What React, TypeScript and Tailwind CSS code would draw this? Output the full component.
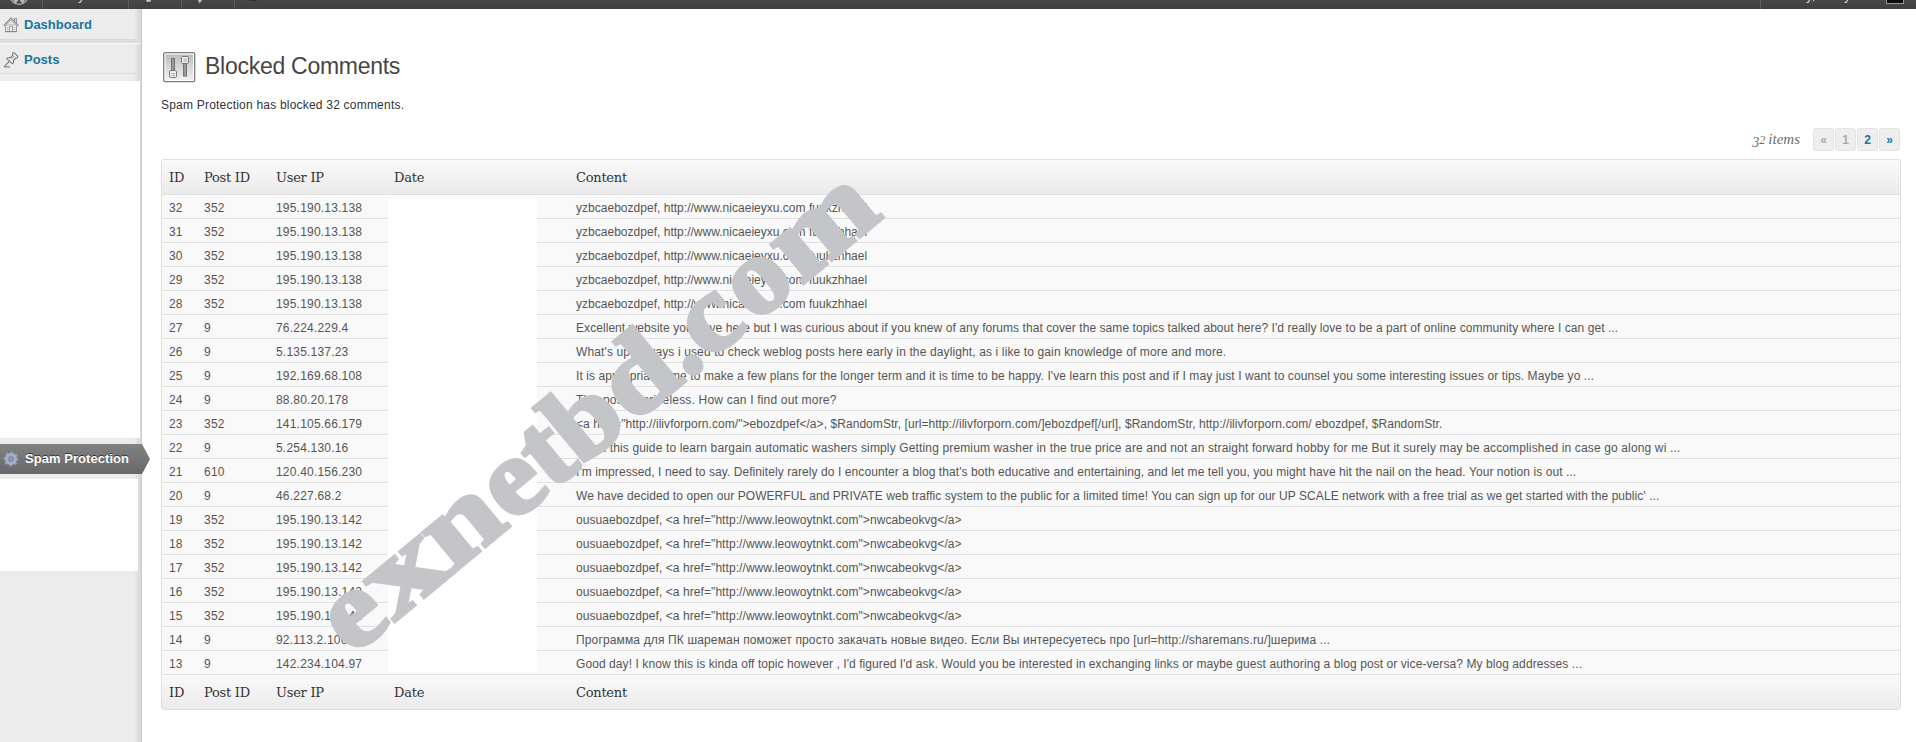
type Comment = { id: number; post: string; ip: string; text: string; track: string };

const nic = "yzbcaebozdpef, http://www.nicaeieyxu.com fuukzhhael";
const leo = 'ousuaebozdpef, <a href="http://www.leowoytnkt.com">nwcabeokvg</a>';

const comments: Comment[] = [
  { id: 32, post: "352", ip: "195.190.13.138", text: nic, track: "tracking-[0.02px]" },
  { id: 31, post: "352", ip: "195.190.13.138", text: nic, track: "tracking-[0.02px]" },
  { id: 30, post: "352", ip: "195.190.13.138", text: nic, track: "tracking-[0.02px]" },
  { id: 29, post: "352", ip: "195.190.13.138", text: nic, track: "tracking-[0.02px]" },
  { id: 28, post: "352", ip: "195.190.13.138", text: nic, track: "tracking-[0.02px]" },
  { id: 27, post: "9", ip: "76.224.229.4", track: "tracking-[0.061px]", text: "Excellent website you have here but I was curious about if you knew of any forums that cover the same topics talked about here? I'd really love to be a part of online community where I can get ..." },
  { id: 26, post: "9", ip: "5.135.137.23", track: "tracking-[0.125px]", text: "What's up, always i used to check weblog posts here early in the daylight, as i like to gain knowledge of more and more." },
  { id: 25, post: "9", ip: "192.169.68.108", track: "tracking-[0.096px]", text: "It is appropriate time to make a few plans for the longer term and it is time to be happy. I've learn this post and if I may just I want to counsel you some interesting issues or tips. Maybe yo ..." },
  { id: 24, post: "9", ip: "88.80.20.178", track: "tracking-[0.19px]", text: "This post is priceless. How can I find out more?" },
  { id: 23, post: "352", ip: "141.105.66.179", track: "tracking-[0.058px]", text: '<a href="http://ilivforporn.com/">ebozdpef</a>, $RandomStr, [url=http://ilivforporn.com/]ebozdpef[/url], $RandomStr, http://ilivforporn.com/ ebozdpef, $RandomStr.' },
  { id: 22, post: "9", ip: "5.254.130.16", track: "tracking-[0.14px]", text: "Track this guide to learn bargain automatic washers simply Getting premium washer in the true price are and not an straight forward hobby for me But it surely may be accomplished in case go along wi ..." },
  { id: 21, post: "610", ip: "120.40.156.230", track: "tracking-[0.075px]", text: "I'm impressed, I need to say. Definitely rarely do I encounter a blog that's both educative and entertaining, and let me tell you, you might have hit the nail on the head. Your notion is out ..." },
  { id: 20, post: "9", ip: "46.227.68.2", track: "tracking-[0.064px]", text: "We have decided to open our POWERFUL and PRIVATE web traffic system to the public for a limited time! You can sign up for our UP SCALE network with a free trial as we get started with the public' ..." },
  { id: 19, post: "352", ip: "195.190.13.142", text: leo, track: "tracking-[0.07px]" },
  { id: 18, post: "352", ip: "195.190.13.142", text: leo, track: "tracking-[0.07px]" },
  { id: 17, post: "352", ip: "195.190.13.142", text: leo, track: "tracking-[0.07px]" },
  { id: 16, post: "352", ip: "195.190.13.142", text: leo, track: "tracking-[0.07px]" },
  { id: 15, post: "352", ip: "195.190.13.142", text: leo, track: "tracking-[0.07px]" },
  { id: 14, post: "9", ip: "92.113.2.106", track: "tracking-[0.145px]", text: "Программа для ПК шареман поможет просто закачать новые видео. Если Вы интересуетесь про [url=http://sharemans.ru/]шерима ..." },
  { id: 13, post: "9", ip: "142.234.104.97", track: "tracking-[0.078px]", text: "Good day! I know this is kinda off topic however , I'd figured I'd ask. Would you be interested in exchanging links or maybe guest authoring a blog post or vice-versa? My blog addresses ..." },
];

const columns = "grid grid-cols-[35px_72px_118px_182px_1fr] pl-[7px]";

function HouseIcon() {
  return (
    <svg width="16" height="16" viewBox="0 0 16 16" fill="none" stroke="#999" strokeWidth="1">
      <path d="M2.5 8v6.5h11V8" fill="#f6f6f6" />
      <path d="M11.5 4V1.500h2V6" fill="#ddd" />
      <path d="M.6 8.600 8 1.200l7.400 7.400" stroke="#858585" strokeWidth="1.200" />
      <path d="M3 8 8 3l5 5z" fill="#e4e4e4" stroke="#b4b4b4" />
      <path d="M6.500 14.500v-5h3v5M4 10.500h1.500M4 12.500h1.500M10.800 10.500h1.500M10.800 12.500h1.500" />
      <path d="M2 14.700h12" stroke="#808080" />
    </svg>
  );
}

function PinIcon() {
  return (
    <svg width="16" height="16" viewBox="0 0 16 16" fill="none" stroke="#787878" strokeWidth="1.100" strokeLinejoin="round">
      <path d="M9.700 1.200c.6-.8 1.500-.3 2.400.4l2 2c.8.9.9 1.800.1 2.300-.6.4-1.300.1-1.300.1L10.300 8.700c.5 1.600.1 2.600-.8 3.200L3.700 6.700c.9-1 2.200-1.100 3.300-.7l3-2.800s-.8-1.200-.3-2z" fill="#f0f0f0" />
      <path d="M6.300 9.500 1 14.700M1 14.900h6" stroke="#868686" />
      <path d="m8.500 6.800 3-2.800" stroke="#aaa" />
    </svg>
  );
}

function GearIcon() {
  return (
    <svg width="16" height="16" viewBox="0 0 16 16">
      <circle cx="8" cy="8" r="6" fill="none" stroke="#8f9dbb" strokeWidth="3" strokeDasharray="2.6 2.112" strokeDashoffset="1.3" />
      <circle cx="8" cy="8" r="4.300" fill="none" stroke="#a3afc8" strokeWidth="3.400" />
      <circle cx="8" cy="8" r="2.700" fill="#7d86a0" />
      <circle cx="8" cy="8" r="1.600" fill="#9ba0ab" />
    </svg>
  );
}

function SlidersIcon() {
  return (
    <svg width="33" height="31" viewBox="0 0 33 31">
      <defs>
        <linearGradient id="plate" x1="0" y1="0" x2="0" y2="1">
          <stop offset="0" stopColor="#bdbdbd" />
          <stop offset="1" stopColor="#f1f1f1" />
        </linearGradient>
      </defs>
      <rect x=".7" y=".7" width="31" height="29" rx="1.500" fill="#fff" stroke="#7c7c7c" strokeWidth="1.300" />
      <rect x="2.500" y="2.500" width="27.500" height="25.500" fill="url(#plate)" />
      <rect x="8.500" y="6.500" width="3" height="13" fill="#9a9a9a" stroke="#747474" />
      <rect x="20.500" y="11" width="3" height="13" fill="#9a9a9a" stroke="#747474" />
      <rect x="6.500" y="18.500" width="7" height="7" rx="1.300" fill="#eee" stroke="#777" />
      <rect x="18.500" y="4.500" width="7" height="7" rx="1.300" fill="#eee" stroke="#777" />
      <path d="M8.500 21.500h3.500M8.500 23.300h3.500M20.500 7.300h3.500M20.500 9.200h3.500" stroke="#999" strokeWidth=".8" />
    </svg>
  );
}

function AdminBar() {
  return (
    <div className="flex h-[9px] overflow-hidden bg-linear-to-b from-[#484848] to-[#3f3f3f] text-[13px] leading-[16px] text-[#ddd]">
      <div className="w-[43px] border-r border-[#5c5c5c] pl-[9px]">
        <svg width="20" height="9" viewBox="0 0 20 9" fill="none" stroke="#b4b4b4">
          <circle cx="10" cy="-5" r="9.300" strokeWidth="1.200" />
          <path d="M3 -4 6.500 2.500 10 -4 13.500 2.500 17 -4M6.500 2.500 9 -1M13.500 2.500 11 -1" strokeWidth="2" />
        </svg>
      </div>
      <div className="w-[86px] border-r border-[#5c5c5c] pl-[35px]"><span className="-mt-[12px] block">y</span></div>
      <div className="w-[53px] border-r border-[#5c5c5c] pl-[17px]"><div className="h-[2px] w-[5px] rounded-b bg-[#c4c4c4]" /></div>
      <div className="w-[53px] border-r border-[#5c5c5c] pl-[16px]">
        <svg width="6" height="4" viewBox="0 0 6 4"><path d="M0 0h4L1.500 3.500z" fill="#c4c4c4" /></svg>
      </div>
      <div className="flex-1 pl-[14px]"><div className="h-[1px] w-[8px] rounded-b bg-[#2f2f2f]" /></div>
      <div className="flex w-[156px] border-l border-[#606060]">
        <span className="-mt-[12px] ml-[45px] w-[38px]">y,</span>
        <span className="-mt-[12px] w-[42px]">y</span>
        <div className="h-[4px] w-[18px] border border-t-0 border-[#999] bg-[#0c0c0c]" />
      </div>
    </div>
  );
}

function Sidebar() {
  return (
    <nav className="flex w-[142px] flex-col border-r border-[#cbcbcb] bg-linear-to-r from-[#ececec] from-95% to-[#d6d6d6] text-[13px] font-bold text-[#21759b]">
      <a className="flex h-[31px] items-center gap-[5px] border-b border-[#d8d8d8] pt-px pl-[3px]">
        <HouseIcon />
        Dashboard
      </a>
      <div className="h-[4px] border-b border-[#f8f8f8] bg-[#dedede]" />
      <a className="flex h-[30px] items-center gap-[5px] border-b border-[#dcdcdc] pt-[2px] pl-[3px]">
        <PinIcon />
        Posts
      </a>
      <div className="mt-[7px] h-[357px] w-[140px] bg-white" />
      <a className="relative mt-[6px] flex h-[30px] w-[142px] items-center gap-[6px] bg-linear-to-b from-[#828282] to-[#686868] pl-[3px] tracking-[0.05px] text-white [text-shadow:0_-1px_0_#333]">
        <GearIcon />
        Spam Protection
        <span className="absolute top-0 left-[142px] h-[30px] w-[8px] bg-linear-to-b from-[#828282] to-[#686868] [clip-path:polygon(0_0,100%_50%,0_100%)]" />
      </a>
      <div className="mt-[5px] h-[92px] w-[138px] bg-white" />
    </nav>
  );
}

function HeadRow({ foot = false }: { foot?: boolean }) {
  return (
    <div
      className={`${columns} items-center bg-linear-to-b from-[#f9f9f9] to-[#ebebeb] font-['DejaVu_Serif',serif] text-[13px] tracking-[-0.25px] text-[#333] ${
        foot ? "h-[34px] border-t border-white" : "h-[35px] border-b border-[#dfdfdf] pt-px"
      }`}
    >
      <span>ID</span>
      <span>Post ID</span>
      <span>User IP</span>
      <span>Date</span>
      <span>Content</span>
    </div>
  );
}

function Pager() {
  const base = "flex h-[23px] w-[21px] items-center justify-center rounded-[3px] border border-[#e3e3e3] bg-[#eee] pt-px";
  return (
    <div className="mr-px flex items-center justify-end text-[12px] font-bold">
      <span className="mr-[13px] flex items-baseline font-['Liberation_Serif',serif] text-[15px] font-normal text-[#6c6c6c] italic">
        <span className="relative top-[3px] text-[14px]">3</span>
        <span className="mr-[3px] text-[12px]">2</span>
        <span>items</span>
      </span>
      <div className="flex gap-px">
        <span className={`${base} text-[#aaa]`}>«</span>
        <span className={`${base} text-[#aaa]`}>1</span>
        <span className={`${base} text-[#21759b]`}>2</span>
        <span className={`${base} text-[#21759b]`}>»</span>
      </div>
    </div>
  );
}

const stamp: [string, string][] = [
  ["e", "w-[54.9px] scale-x-[1.05]"],
  ["x", "w-[75.3px] scale-x-[1.34]"],
  ["n", "w-[76.4px] scale-x-[1.18]"],
  ["e", "w-[52.2px] scale-x-[1.04]"],
  ["t", "w-[37.3px] scale-x-[1.02]"],
  ["b", "w-[67.9px] scale-x-[1.03]"],
  ["d", "w-[70.9px] scale-x-[1.08]"],
  [".", "w-[26.7px] scale-x-[0.9]"],
  ["c", "w-[60.6px] scale-x-[1.05]"],
  ["o", "w-[59.8px] scale-x-[1]"],
  ["m", "w-[108px] scale-x-[1.13]"],
];

function Watermark() {
  return (
    <div className="pointer-events-none absolute top-[557.5px] left-[353px] flex origin-[0_98.8px] scale-y-[0.95] [rotate:-39.6deg] font-['Liberation_Serif',serif] text-[115px] leading-[120px] font-bold text-[#c3c5c8] [-webkit-text-stroke:4px_#c3c5c8]">
      {stamp.map(([ch, cls], i) => (
        <span key={i} className={`${cls} shrink-0 origin-left`}>
          {ch}
        </span>
      ))}
    </div>
  );
}

export default function App() {
  return (
    <div className="relative flex h-[742px] w-[1916px] flex-col overflow-hidden bg-white font-['Liberation_Sans',Arial,sans-serif]">
      <AdminBar />
      <div className="flex flex-1">
        <Sidebar />
        <main className="flex-1 pt-[43px] pr-[15px] pl-[19px]">
          <div className="flex items-start gap-[9px] pl-[2px]">
            <SlidersIcon />
            <h1 className="-mt-px text-[23px] leading-[31px] tracking-[-0.27px] text-[#464646]">Blocked Comments</h1>
          </div>
          <p className="mt-[13px] text-[12px] leading-[18px] tracking-[0.21px] text-[#333]">
            Spam Protection has blocked 32 comments.
          </p>
          <div className="mt-[14px]">
            <Pager />
          </div>
          <div className="relative mt-[8px] overflow-hidden rounded-[3px] border border-[#dfdfdf] bg-[#f9f9f9]">
            <HeadRow />
            {comments.map((c) => (
              <div
                key={c.id}
                className={`${columns} h-[24px] items-center border-t border-b border-t-white border-b-[#dfdfdf] pt-[2px] text-[12px] leading-[18px] whitespace-nowrap text-[#555]`}
              >
                <span className="tracking-[0.2px]">{c.id}</span>
                <span className="tracking-[0.25px]">{c.post}</span>
                <span className="tracking-[0.2px]">{c.ip}</span>
                <span />
                <span className={c.track}>{c.text}</span>
              </div>
            ))}
            <HeadRow foot />
            <div className="absolute top-[39px] left-[226px] h-[473px] w-[149px] bg-white" />
          </div>
        </main>
      </div>
      <Watermark />
    </div>
  );
}
